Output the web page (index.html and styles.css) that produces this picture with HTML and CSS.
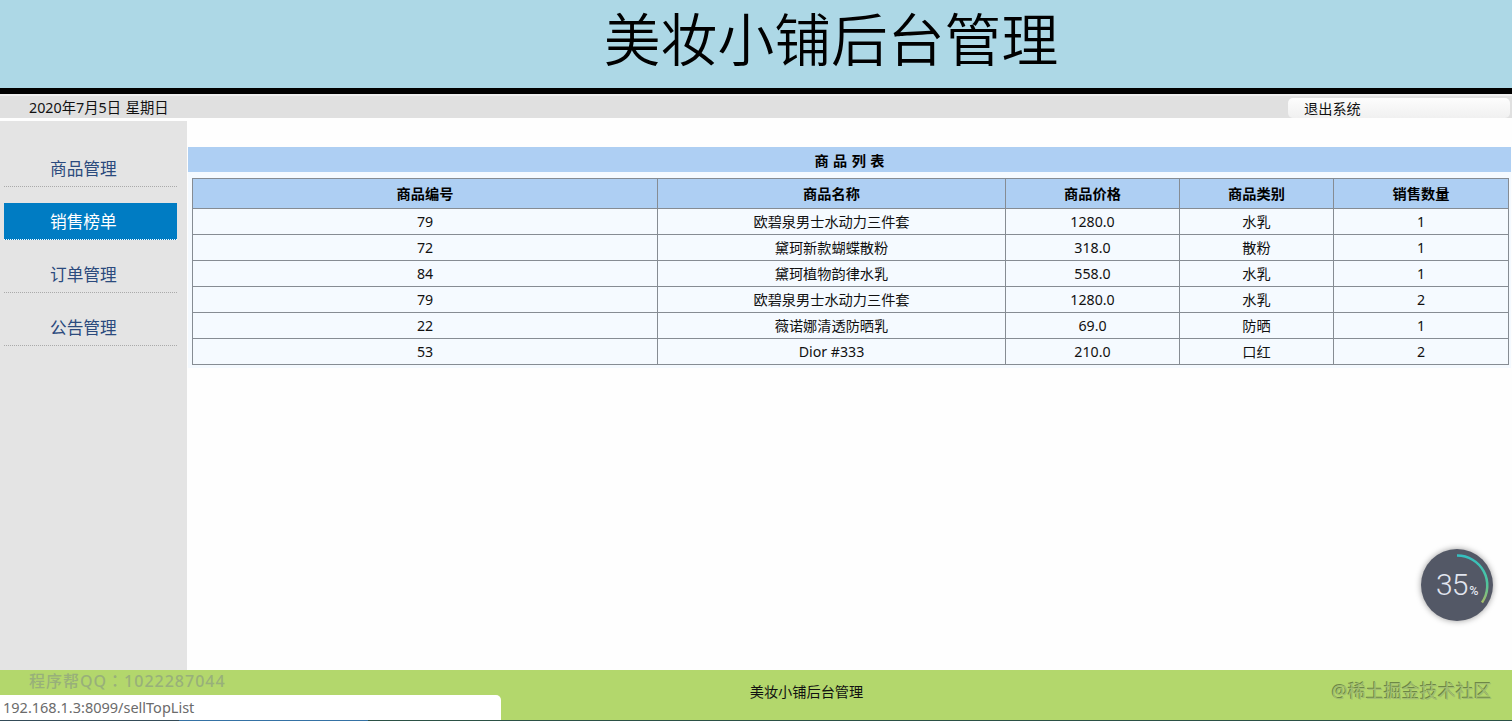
FILE: index.html
```
<!DOCTYPE html>
<html lang="zh-CN">
<head>
    <meta charset="UTF-8">
    <title>美妆小铺后台管理</title>
    <link rel="stylesheet" href="styles.css">
</head>
<body>
    <div class="header">
        <h1>美妆小铺后台管理</h1>
    </div>
    <div class="toolbar">
        <span class="date">2020年7月5日 星期日</span>
        <a class="logout">退出系统</a>
    </div>
    <div class="main">
        <ul class="menu">
            <li><a>商品管理</a></li>
            <li><a class="active">销售榜单</a></li>
            <li><a>订单管理</a></li>
            <li><a>公告管理</a></li>
        </ul>
        <div class="content">
            <div class="list-title">商 品 列 表</div>
            <div class="list">
                <table>
                    <colgroup>
                        <col class="col-id">
                        <col class="col-name">
                        <col class="col-price">
                        <col class="col-type">
                        <col class="col-num">
                    </colgroup>
                    <tr>
                        <th>商品编号</th>
                        <th>商品名称</th>
                        <th>商品价格</th>
                        <th>商品类别</th>
                        <th>销售数量</th>
                    </tr>
                    <tr>
                        <td>79</td>
                        <td>欧碧泉男士水动力三件套</td>
                        <td>1280.0</td>
                        <td>水乳</td>
                        <td>1</td>
                    </tr>
                    <tr>
                        <td>72</td>
                        <td>黛珂新款蝴蝶散粉</td>
                        <td>318.0</td>
                        <td>散粉</td>
                        <td>1</td>
                    </tr>
                    <tr>
                        <td>84</td>
                        <td>黛珂植物韵律水乳</td>
                        <td>558.0</td>
                        <td>水乳</td>
                        <td>1</td>
                    </tr>
                    <tr>
                        <td>79</td>
                        <td>欧碧泉男士水动力三件套</td>
                        <td>1280.0</td>
                        <td>水乳</td>
                        <td>2</td>
                    </tr>
                    <tr>
                        <td>22</td>
                        <td>薇诺娜清透防晒乳</td>
                        <td>69.0</td>
                        <td>防晒</td>
                        <td>1</td>
                    </tr>
                    <tr>
                        <td>53</td>
                        <td>Dior #333</td>
                        <td>210.0</td>
                        <td>口红</td>
                        <td>2</td>
                    </tr>
                </table>
            </div>
        </div>
    </div>
    <div class="footer">美妆小铺后台管理</div>

    <!-- floating layers -->
    <div class="qq">程序帮QQ<span lang="zh-TW">：</span>1022287044</div>
    <div class="community">@稀土掘金技术社区</div>
    <div class="status">192.168.1.3:8099/sellTopList</div>
    <div class="taskbar"></div>
    <div class="ball">
        <svg width="72" height="72" viewBox="0 0 72 72">
            <defs>
                <linearGradient id="arc" x1="0" y1="0" x2="0" y2="1">
                    <stop offset="0" stop-color="#35bfc0"/>
                    <stop offset="0.6" stop-color="#4fc59d"/>
                    <stop offset="1" stop-color="#a5bb68"/>
                </linearGradient>
            </defs>
            <path d="M36 6.500A30 30 0 0 1 61 53.500" fill="none" stroke="url(#arc)" stroke-width="2.500"/>
        </svg>
        <div class="percent">35<small>%</small></div>
    </div>
</body>
</html>
```

FILE: styles.css
```
* {
    box-sizing: border-box;
}
body {
    margin: 0;
    height: 721px;
    display: flex;
    flex-direction: column;
    overflow: hidden;
    background-color: #fefefe;
    color: #111;
    font-family: "Noto Sans", "Noto Sans CJK SC", sans-serif;
    font-size: 14.2px;
}
.header {
    height: 94px;
    background-color: #add8e6;
    border-bottom: 6px solid #000;
}
.header h1 {
    margin: 0;
    padding-left: 150px;
    text-align: center;
    font-size: 56.8px;
    font-weight: 350;
    line-height: 79px;
    color: #000;
}
.toolbar {
    display: flex;
    justify-content: space-between;
    height: 24px;
    padding: 0 2px 0 29px;
    background-color: #e0e0e0;
    border-top: 2px solid #eee;
    line-height: 23px;
}
.date {
    font-size: 14.3px;
    word-spacing: 1px;
}
.logout {
    width: 222px;
    height: 20px;
    margin-top: 2px;
    padding-left: 16px;
    border-radius: 5px;
    background: linear-gradient(#fdfdfd, #f0f0f0);
    line-height: 21px;
}
.main {
    display: flex;
    height: 549px;
    margin-top: 3px;
}
.menu {
    width: 187px;
    margin: 0;
    padding: 29px 10px 0 4px;
    background-color: #e4e4e4;
    list-style: none;
}
.menu li {
    margin-bottom: 16px;
}
.menu a {
    display: block;
    height: 37px;
    padding-left: 46px;
    border-bottom: 1px dotted #aaa;
    font-size: 16.7px;
    line-height: 37px;
    color: #2b4a7d;
}
.menu .active {
    background-color: #007cc3;
    border-bottom-color: #fff;
    color: #fff;
}
.content {
    flex: 1;
    padding: 26px 1px 0;
}
.list-title {
    height: 25px;
    background-color: #aecff3;
    text-align: center;
    font-weight: bold;
    line-height: 27px;
    word-spacing: 0.7px;
    color: #000;
}
.list {
    padding: 6px 2px 3px 4px;
    background-color: #f5faff;
}
table {
    width: 1317px;
    table-layout: fixed;
    border-collapse: collapse;
}
th, td {
    height: 26px;
    padding: 0;
    border: 1px solid #868c93;
    text-align: center;
    line-height: 20px;
}
th {
    height: 30px;
    background-color: #aecff3;
    color: #000;
}
.col-id {
    width: 465px;
}
.col-name {
    width: 348px;
}
.col-price {
    width: 174px;
}
.col-type {
    width: 154px;
}
.footer {
    height: 51px;
    padding-left: 101px;
    background-color: #b3d76c;
    text-align: center;
    line-height: 44px;
}
.qq {
    position: absolute;
    left: 29px;
    top: 668px;
    font-size: 16px;
    font-weight: 500;
    letter-spacing: 1px;
    line-height: 24px;
    color: #98b07a;
}
.qq span {
    font-family: "Noto Sans CJK TC", sans-serif;
}
.community {
    position: absolute;
    right: 20px;
    top: 679px;
    font-size: 18px;
    line-height: 24px;
    color: #a1bd71;
    text-shadow: -1px -1px 0 #6d8745;
}
.status {
    position: absolute;
    left: 0;
    top: 695px;
    width: 501px;
    height: 25px;
    padding-left: 3px;
    border-top-right-radius: 5px;
    background-color: #fff;
    font-size: 14.5px;
    line-height: 24px;
    color: #6b6b6b;
}
.taskbar {
    position: absolute;
    left: 0;
    top: 720px;
    width: 100%;
    height: 1px;
    background: linear-gradient(90deg, #344b58 179px, #3572a5 179px, #3572a5 368px, #2b5145 368px);
}
.ball {
    position: absolute;
    left: 1421px;
    top: 549px;
    width: 72px;
    height: 72px;
    border-radius: 50%;
    background-color: #535866;
    box-shadow: 0 0 6px rgba(0, 0, 0, 0.4);
}
.percent {
    position: absolute;
    left: 15px;
    top: 18px;
    font-family: Roboto, sans-serif;
    font-size: 30px;
    font-weight: 300;
    line-height: 36px;
    letter-spacing: -1px;
    color: #e1e5ef;
}
.percent small {
    font-size: 12.5px;
    font-weight: 500;
    margin-left: 2px;
}
```
